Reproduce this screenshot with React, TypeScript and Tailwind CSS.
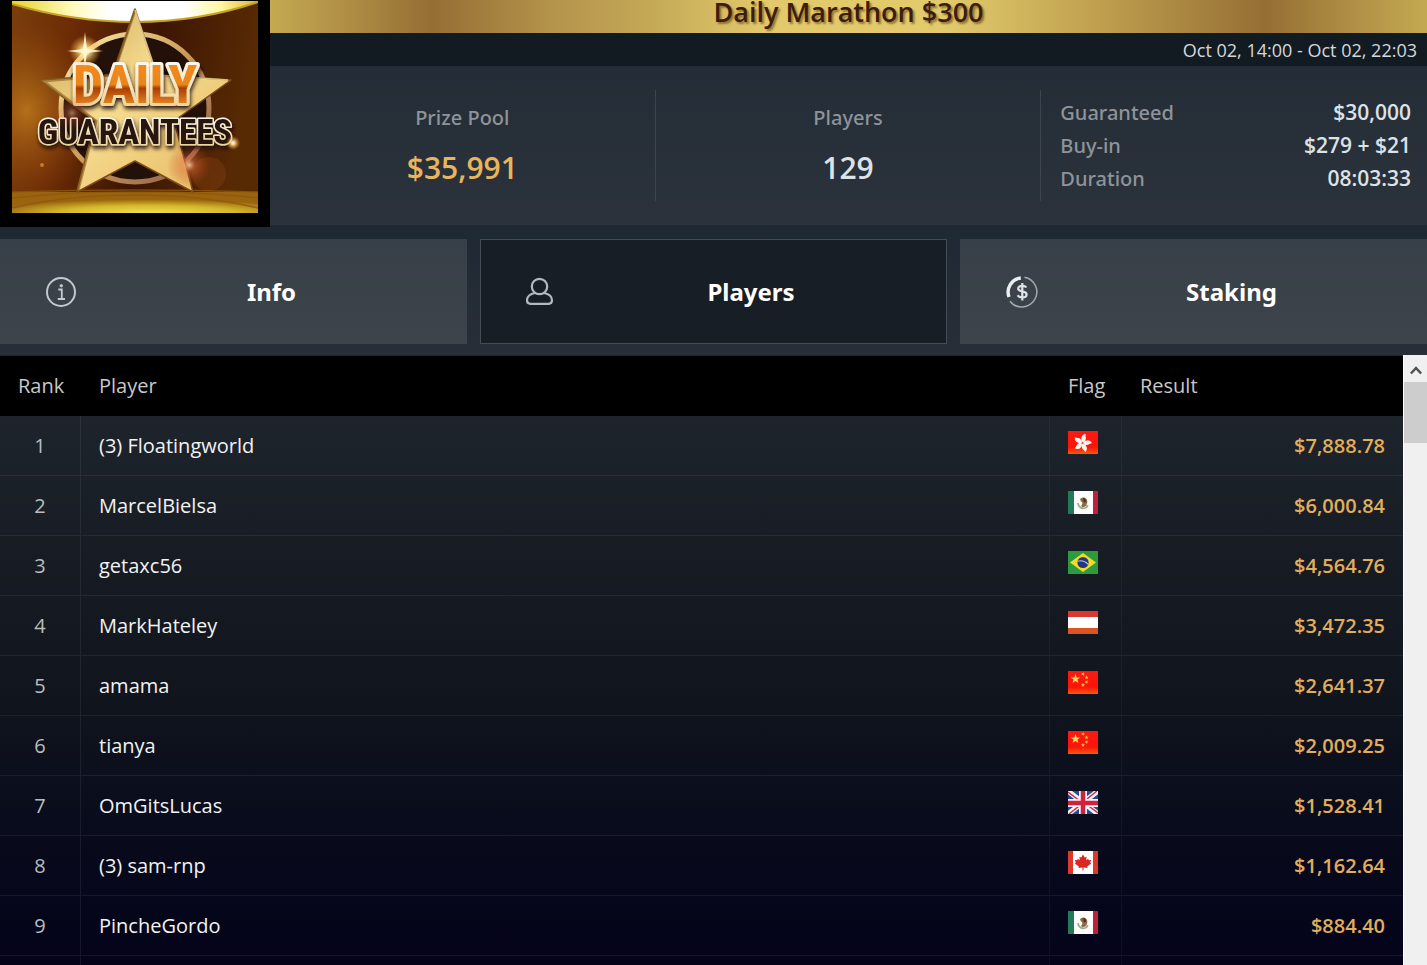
import type { ReactNode } from "react";

type Country = "hk" | "mx" | "br" | "at" | "cn" | "gb" | "ca";

const players: { name: string; flag: Country; result: string }[] = [
  { name: "(3) Floatingworld", flag: "hk", result: "$7,888.78" },
  { name: "MarcelBielsa", flag: "mx", result: "$6,000.84" },
  { name: "getaxc56", flag: "br", result: "$4,564.76" },
  { name: "MarkHateley", flag: "at", result: "$3,472.35" },
  { name: "amama", flag: "cn", result: "$2,641.37" },
  { name: "tianya", flag: "cn", result: "$2,009.25" },
  { name: "OmGitsLucas", flag: "gb", result: "$1,528.41" },
  { name: "(3) sam-rnp", flag: "ca", result: "$1,162.64" },
  { name: "PincheGordo", flag: "mx", result: "$884.40" },
];

const countryNames: Record<Country, string> = {
  hk: "Hong Kong",
  mx: "Mexico",
  br: "Brazil",
  at: "Austria",
  cn: "China",
  gb: "United Kingdom",
  ca: "Canada",
};

const star = (cx: number, cy: number, r: number, turn = 0) =>
  Array.from({ length: 10 }, (_, i) => {
    const a = ((i * 36 - 90 + turn) * Math.PI) / 180;
    const d = i % 2 ? r * 0.4 : r;
    return `${(cx + d * Math.cos(a)).toFixed(2)},${(cy + d * Math.sin(a)).toFixed(2)}`;
  }).join(" ");

const flagArt: Record<Country, ReactNode> = {
  hk: (
    <>
      <rect width="30" height="23" fill="url(#flag-red)" />
      {[10, 82, 154, 226, 298].map((deg) => (
        <path
          key={deg}
          transform={`rotate(${deg} 14.5 12)`}
          d="M14.5 11.4C11.6 9 11.6 3.800 16.200 2.600C15.400 4.400 18 6.200 16.800 9.200C16.400 10.400 15.400 11 14.500 11.400Z"
          fill="#fff3f0"
        />
      ))}
    </>
  ),
  mx: (
    <>
      <rect width="30" height="23" fill="#fdfdfb" />
      <rect width="6" height="23" fill="#217a58" />
      <rect x="25" width="5" height="23" fill="#c0203f" />
      <path d="M12 8.5c2-3 6-2.500 7 .5c1 3-.5 6-3 7c-2 .5-3-.5-2.500-2c1.500-1 1-3-.5-3.500z" fill="#8a6a4a" />
      <path d="M15 7c2 0 3 1.500 3 3.500l-2 1z" fill="#4a3220" />
      <path d="M10 12c0 4 4 6 7 5c1.500-.5 2.500-2 2.500-3" fill="none" stroke="#9dac91" strokeWidth="1.800" />
    </>
  ),
  br: (
    <>
      <rect width="30" height="23" fill="#2c9b3e" />
      <path d="M15 2L28 11.500L15 21L2 11.500Z" fill="#f3dc28" />
      <circle cx="15" cy="11.500" r="5.600" fill="#26357f" />
      <path d="M9.600 10.200C13 9.200 17.500 10.500 20.200 13.300" fill="none" stroke="#b9c6dc" strokeWidth="1.100" />
    </>
  ),
  at: (
    <>
      <rect width="30" height="23" fill="#fff" />
      <rect width="30" height="6" fill="#d83a32" />
      <rect y="17" width="30" height="6" fill="#dc5423" />
    </>
  ),
  cn: (
    <>
      <rect width="30" height="23" fill="url(#flag-red)" />
      <polygon points={star(7.5, 8, 5)} fill="#ffd65a" />
      <polygon points={star(15, 3, 2.2, 20)} fill="#ffc04a" />
      <polygon points={star(18.5, 6.5, 2.2)} fill="#ffc04a" />
      <polygon points={star(18.5, 11, 2.2, 20)} fill="#ffc04a" />
      <polygon points={star(15, 14, 2.2)} fill="#ffc04a" />
    </>
  ),
  gb: (
    <>
      <rect width="30" height="23" fill="#254a8f" />
      <path d="M0 0L30 23M30 0L0 23" stroke="#f4f4fa" strokeWidth="5" />
      <path d="M0 1L12 10M30 22L18 13M29 0L17 9.500M1 23L13 13.500" stroke="#cf2b45" strokeWidth="1.500" />
      <path d="M15 0V23M0 12H30" stroke="#f4f4fa" strokeWidth="8" />
      <path d="M15 0V23M0 12H30" stroke="#d2213c" strokeWidth="4.500" />
    </>
  ),
  ca: (
    <>
      <rect width="30" height="23" fill="#fff" />
      <rect width="5" height="23" fill="#dd382c" />
      <rect x="25" width="5" height="23" fill="#dd382c" />
      <path
        d="M15 3.500L16.800 6.500L18.600 5.800L18.200 9.300L20.200 7.800L20.800 9.200L23.200 9L22.200 11.600L23.200 12.500L19.200 15.600L19.500 17L15.500 16.600V19.500H14.500V16.600L10.500 17L10.800 15.600L6.800 12.500L7.800 11.600L6.800 9L9.200 9.200L9.800 7.800L11.800 9.300L11.400 5.800L13.200 6.500Z"
        fill="#dc2626"
      />
    </>
  ),
};

function Flag({ country }: { country: Country }) {
  return (
    <svg viewBox="0 0 30 23" role="img" aria-label={countryNames[country]} className="block h-[23px] w-[30px]">
      <defs>
        <linearGradient id="flag-red" x1="0" y1="0" x2="0" y2="1">
          <stop offset="0" stopColor="#fb1a12" />
          <stop offset="0.7" stopColor="#fb1408" />
          <stop offset="1" stopColor="#fb5a0c" />
        </linearGradient>
      </defs>
      {flagArt[country]}
    </svg>
  );
}

function Emblem() {
  return (
    <svg viewBox="0 0 246 212" className="block h-[212px] w-[246px]" role="img" aria-label="Daily Guarantees">
      <defs>
        <linearGradient id="wall" x1="0" x2="1" y1="0" y2="0.15">
          <stop offset="0" stopColor="#7a3f0c" />
          <stop offset="0.25" stopColor="#6d2c05" />
          <stop offset="0.6" stopColor="#3c1503" />
          <stop offset="1" stopColor="#582a04" />
        </linearGradient>
        <linearGradient id="lamp" x1="0" x2="1" y1="0" y2="0">
          <stop offset="0" stopColor="#e8d428" />
          <stop offset="0.25" stopColor="#fffbc0" />
          <stop offset="0.4" stopColor="#fff" />
          <stop offset="0.7" stopColor="#fff" />
          <stop offset="0.85" stopColor="#fff6a0" />
          <stop offset="1" stopColor="#d8b828" />
        </linearGradient>
        <radialGradient id="floor" cx="0.55" cy="1" r="0.65">
          <stop offset="0" stopColor="#f0e050" />
          <stop offset="0.55" stopColor="#d5b82c" />
          <stop offset="1" stopColor="#9a640e" />
        </radialGradient>
        <linearGradient id="gold" x1="0" y1="0" x2="1" y2="1">
          <stop offset="0" stopColor="#c99f4e" />
          <stop offset="0.45" stopColor="#f6dc90" />
          <stop offset="1" stopColor="#e6b860" />
        </linearGradient>
        <linearGradient id="ring" x1="0" y1="0" x2="1" y2="1">
          <stop offset="0" stopColor="#fff2ae" />
          <stop offset="0.5" stopColor="#c99a56" />
          <stop offset="1" stopColor="#8a5a4c" />
        </linearGradient>
        <linearGradient id="fire" x1="0" y1="0" x2="0" y2="1">
          <stop offset="0.15" stopColor="#f58a1e" />
          <stop offset="0.5" stopColor="#e8851c" />
          <stop offset="0.56" stopColor="#a83e06" />
          <stop offset="0.85" stopColor="#f09024" />
        </linearGradient>
        <linearGradient id="rim" x1="0" y1="0" x2="0" y2="1">
          <stop offset="0" stopColor="#fff" />
          <stop offset="1" stopColor="#eccd86" />
        </linearGradient>
        <radialGradient id="spark">
          <stop offset="0" stopColor="#fff" />
          <stop offset="0.25" stopColor="#ffe9a0" stopOpacity="0.9" />
          <stop offset="1" stopColor="#ff9a20" stopOpacity="0" />
        </radialGradient>
        <radialGradient id="glow">
          <stop offset="0" stopColor="#d08a20" stopOpacity="0.7" />
          <stop offset="1" stopColor="#a05010" stopOpacity="0" />
        </radialGradient>
        <radialGradient id="flare">
          <stop offset="0" stopColor="#ffd0a0" stopOpacity="0.9" />
          <stop offset="0.3" stopColor="#e06a40" stopOpacity="0.5" />
          <stop offset="1" stopColor="#b04010" stopOpacity="0" />
        </radialGradient>
        <filter id="shade" x="-10%" y="-20%" width="120%" height="150%">
          <feDropShadow dx="1" dy="3" stdDeviation="2" floodColor="#1c0d08" floodOpacity="0.95" />
        </filter>
      </defs>
      <rect width="246" height="212" fill="url(#wall)" />
      <ellipse cx="15" cy="110" rx="70" ry="90" fill="url(#glow)" />
      <path d="M0 0H246V1C205 15 165 21 123 21C81 21 41 15 0 3Z" fill="url(#lamp)" />
      <path d="M0 3C41 15 81 21 123 21C165 21 205 15 246 1" fill="none" stroke="#c8a41e" strokeWidth="2" />
      <path d="M0 191H246V212H0Z" fill="url(#floor)" />
      <path d="M0 191Q123 187 246 191M0 197Q60 190 123 191Q186 190 246 197M0 207Q55 194 123 194Q191 194 246 207" fill="none" stroke="#8f560e" strokeWidth="1.500" opacity="0.8" />
      <circle cx="123" cy="107" r="75" fill="#1f100a" opacity="0.9" />
      <circle cx="123" cy="107" r="74" fill="none" stroke="url(#ring)" strokeWidth="5" />
      <path d="M123 8L145 74L219 79L162 120L181 191L123 160L65 191L83 120L28 79L101 74Z" fill="url(#gold)" stroke="#7a4c16" strokeWidth="1.500" strokeLinejoin="round" />
      <path d="M123 9L101 74L31 80L84 120L66 189" fill="none" stroke="#8f6426" strokeWidth="3" opacity="0.65" />
      <path d="M123 9L145 74L216 79" fill="none" stroke="#fff1b8" strokeWidth="1.500" opacity="0.7" />
      <g
        textAnchor="middle"
        fontFamily="'Noto Sans ExtraCondensed', 'Roboto Condensed', 'Open Sans Condensed', 'Noto Sans Condensed', Roboto, sans-serif"
        fontWeight="700"
        strokeLinejoin="round"
        paintOrder="stroke"
      >
        <text x="123" y="102" fontSize="54" fill="url(#fire)" stroke="url(#rim)" strokeWidth="6" filter="url(#shade)">
          DAILY
        </text>
        <text x="123" y="143" fontSize="35" fill="#28130f" stroke="url(#rim)" strokeWidth="3" filter="url(#shade)">
          GUARANTEES
        </text>
      </g>
      <circle cx="73" cy="50" r="16" fill="url(#spark)" />
      <path d="M73 31L75 48L91 50L75 52L73 66L71 52L55 50L71 48Z" fill="#fff8d0" opacity="0.9" />
      <circle cx="60" cy="112" r="18" fill="url(#flare)" opacity="0.6" />
      <circle cx="177" cy="164" r="22" fill="url(#flare)" />
      <circle cx="197" cy="173" r="17" fill="#c86020" opacity="0.18" />
      <circle cx="221" cy="142" r="7" fill="url(#spark)" />
      <circle cx="30" cy="164" r="2" fill="#e0882c" opacity="0.8" />
    </svg>
  );
}

function InfoIcon() {
  return (
    <svg viewBox="0 0 30 30" className="block size-[30px]" fill="none" stroke="#c3c9ce" aria-hidden="true">
      <circle cx="15" cy="15" r="14" strokeWidth="2" />
      <path d="M12.300 12.500H15.800V22M11.800 22H19" strokeWidth="1.800" />
      <circle cx="15.300" cy="8.800" r="1.300" fill="#c3c9ce" strokeWidth="0.800" />
    </svg>
  );
}

function PlayerIcon() {
  return (
    <svg viewBox="0 0 30 30" className="block size-[30px]" fill="none" stroke="#b4b9bd" strokeWidth="2.200" aria-hidden="true">
      <circle cx="13.500" cy="9.500" r="7.700" />
      <path d="M8.800 16C4.500 17 1 19.300 1 23.300C1 25.300 2.200 26.800 4.300 26.800H22.700C24.800 26.800 26 25.300 26 23.300C26 19.300 22.500 17 18.200 16" />
    </svg>
  );
}

function StakingIcon() {
  return (
    <svg viewBox="0 0 32 32" className="block size-8 shrink-0" fill="none" aria-hidden="true">
      <path d="M18.500 1.200A15 15 0 1 1 4 25.200" stroke="#a3aaaf" strokeWidth="1.500" />
      <path d="M14.800 2A14.200 14.200 0 0 0 3 21" stroke="#eceff1" strokeWidth="3.400" />
      <path d="M20.400 11.500C19.600 10.300 18 9.800 16.200 9.800C13.700 9.800 12.200 10.900 12.200 12.700C12.200 16.400 20.600 14.300 20.600 18.400C20.600 20.300 18.800 21.400 16.300 21.400C14.200 21.400 12.500 20.700 11.700 19.300M16.300 7V24.500" stroke="#e0e3e5" strokeWidth="2.200" />
    </svg>
  );
}

function Tab({ label, icon, active = false }: { label: string; icon: ReactNode; active?: boolean }) {
  return (
    <button
      type="button"
      role="tab"
      aria-selected={active}
      className={
        active
          ? "flex h-[105px] items-center border border-[#424c54] bg-[#181e26] pl-[45px]"
          : "flex h-[105px] items-center bg-linear-to-b from-[#373f48] to-[#3d444b] pl-[46px]"
      }
    >
      <span className="flex w-[30px] items-center">{icon}</span>
      <span className="flex-1 text-center font-['Noto_Sans',sans-serif] text-2xl font-bold text-white">{label}</span>
    </button>
  );
}

function Stat({ label, value, valueClass }: { label: string; value: string; valueClass: string }) {
  return (
    <div className="flex flex-col items-center justify-center gap-4 border-r border-[#3d444d]">
      <dt className="font-['Noto_Sans',sans-serif] text-xl leading-7 font-medium text-[#8e949a]">{label}</dt>
      <dd className={`text-3xl leading-10 font-semibold ${valueClass}`}>{value}</dd>
    </div>
  );
}

function Detail({ label, value }: { label: string; value: string }) {
  return (
    <div className="flex justify-between leading-[33px]">
      <dt className="font-['Noto_Sans',sans-serif] text-xl leading-[33px] font-medium text-[#8e949a]">{label}</dt>
      <dd className="text-[21px] font-semibold text-[#dde2e7]">{value}</dd>
    </div>
  );
}

const line = "border-[#8c9bb4]/12";
const faintLine = "border-r-[#8c9bb4]/7 border-b-[#8c9bb4]/12";

export default function App() {
  return (
    <div className="flex h-screen flex-col overflow-hidden bg-[#05061a] font-['Open_Sans','Noto_Sans',sans-serif]">
      <div className="bg-linear-to-b from-[#17212a] from-0% via-[#1f2933] via-65% to-[#282e38]">
        <header className="flex">
          <div className="h-[227px] shrink-0 bg-black px-3 pt-px">
            <Emblem />
          </div>
          <div className="flex-1">
            <div className="h-[33px] bg-[linear-gradient(90deg,#c4a951_0%,#b19146_6%,#956e34_14%,#b3924a_24%,#c5a957_33%,#e2c96b_43%,#e2cb6d_58%,#c4a552_70%,#956e34_86%,#b19146_94%,#c4a951_100%)] text-center">
              <h1 className="text-[27px] leading-6 font-semibold text-[#3e1d08] [text-shadow:2px_2px_2px_rgba(80,50,10,0.55)]">
                Daily Marathon $300
              </h1>
            </div>
            <p className="bg-[#131b22] pt-0.5 pr-2.5 text-right text-lg leading-[31px] text-[#d3d8dc]">
              Oct 02, 14:00 - Oct 02, 22:03
            </p>
            <dl className="grid h-[159px] grid-cols-3 bg-linear-to-b from-[#242d37] to-[#2b323b] py-6">
              <Stat label="Prize Pool" value="$35,991" valueClass="text-[#e8b45c]" />
              <Stat label="Players" value="129" valueClass="text-[#dde2e7]" />
              <div className="flex flex-col justify-center pr-4 pl-[19px]">
                <Detail label="Guaranteed" value="$30,000" />
                <Detail label="Buy-in" value="$279 + $21" />
                <Detail label="Duration" value="08:03:33" />
              </div>
            </dl>
          </div>
        </header>
        <div role="tablist" className="grid grid-cols-3 gap-[13px] pt-3 pb-[11px]">
          <Tab label="Info" icon={<InfoIcon />} />
          <Tab label="Players" icon={<PlayerIcon />} active />
          <Tab label="Staking" icon={<StakingIcon />} />
        </div>
      </div>

      <main className="flex min-h-0 flex-1">
        <div className="flex-1 overflow-hidden bg-linear-to-b from-[#1e242b] from-10% via-[#11151d] via-55% to-[#04031a] pt-px">
          <table className="w-full table-fixed border-separate border-spacing-0 text-xl leading-7">
            <colgroup>
              <col className="w-[81px]" />
              <col />
              <col className="w-[72px]" />
              <col className="w-[281px]" />
            </colgroup>
            <thead className="bg-black text-left text-[#c8c8c8]">
              <tr className="h-[60px]">
                <th className="px-[18px] font-normal">Rank</th>
                <th className="px-[18px] font-normal">Player</th>
                <th className="px-[18px] font-normal">Flag</th>
                <th className="px-[18px] font-normal">Result</th>
              </tr>
            </thead>
            <tbody>
              {players.map((p, i) => (
                <tr key={i} className="h-[60px]">
                  <td className={`border-r border-b text-center text-[#b9bdc0] ${line}`}>{i + 1}</td>
                  <td className={`border-r border-b px-[18px] text-[#f1f3f4] ${faintLine}`}>{p.name}</td>
                  <td className={`border-r border-b px-[18px] pb-1.5 ${faintLine}`}>
                    <Flag country={p.flag} />
                  </td>
                  <td className={`border-b px-[18px] text-right font-semibold text-[#e0ae5c] ${line}`}>{p.result}</td>
                </tr>
              ))}
              <tr className="h-[60px]">
                <td className={`border-r ${line}`} />
                <td className={`border-r ${faintLine}`} />
                <td className={`border-r ${faintLine}`} />
                <td />
              </tr>
            </tbody>
          </table>
        </div>
        <div className="w-6 border-l border-white bg-[#f0f0f0]">
          <button type="button" aria-label="Scroll up" className="flex h-[27px] w-full items-center justify-center">
            <svg viewBox="0 0 12 10" className="mt-0.5 h-2.5 w-3" fill="none" stroke="#505050" strokeWidth="2.500" aria-hidden="true">
              <path d="M0.900 8.500L6 3L11.100 8.500" />
            </svg>
          </button>
          <div className="h-[61px] bg-[#cdcdcd]" />
        </div>
      </main>
    </div>
  );
}
